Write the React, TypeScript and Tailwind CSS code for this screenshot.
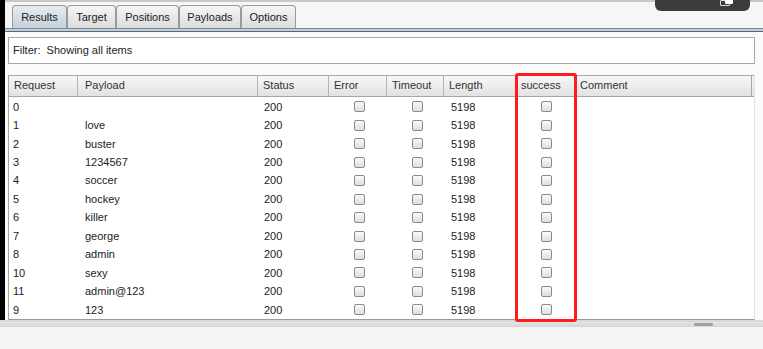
import React from 'react';

const rows: [string, string][] = [
  ['0', ''],
  ['1', 'love'],
  ['2', 'buster'],
  ['3', '1234567'],
  ['4', 'soccer'],
  ['5', 'hockey'],
  ['6', 'killer'],
  ['7', 'george'],
  ['8', 'admin'],
  ['10', 'sexy'],
  ['11', 'admin@123'],
  ['9', '123'],
];

const tabs = ['Results', 'Target', 'Positions', 'Payloads', 'Options'];
const cols = ['Request', 'Payload', 'Status', 'Error', 'Timeout', 'Length', 'success', 'Comment'];
const gridCols = 'grid grid-cols-[70px_180px_71px_58px_57px_72px_59px_177px]';

const Box = () => (
  <span className="block w-[11px] h-[11px] rounded-[2px] border border-[#8a8a8a] bg-gradient-to-b from-[#fafafa] to-[#dedede]" />
);

export default function App() {
  return (
    <div
      className="relative w-[763px] h-[349px] overflow-hidden bg-[#f4f4f4] text-[11px] text-[#222]"
      style={{ fontFamily: '"Liberation Sans", Arial, sans-serif' }}
    >
      <div className="flex h-[320px]">
        {/* black strip at left edge */}
        <div className="w-[5px] bg-black" />

        <div className="flex-1 flex flex-col bg-[#fbfbfb]">
          <div className="h-[5px] border-t-2 border-[#c8c8c8] bg-[#f6f6f6]" />

          {/* tabs */}
          <div className="flex h-[23px] pl-[7px] items-end bg-[#f6f6f6]">
            {tabs.map((t, i) => (
              <div
                key={t}
                className={
                  'h-[23px] flex items-center justify-center border border-b-0 border-[#9a9a9a] rounded-t-[4px] text-[#222] ' +
                  (i === 0
                    ? 'w-[55px] bg-gradient-to-b from-[#e6ecf2] to-[#c6d0da]'
                    : i === 1
                    ? 'w-[49px] bg-gradient-to-b from-[#f6f6f6] to-[#dcdcdc]'
                    : i === 2
                    ? 'w-[63px] bg-gradient-to-b from-[#f6f6f6] to-[#dcdcdc]'
                    : i === 3
                    ? 'w-[62px] bg-gradient-to-b from-[#f6f6f6] to-[#dcdcdc]'
                    : 'w-[55px] bg-gradient-to-b from-[#f6f6f6] to-[#dcdcdc]')
                }
              >
                {t}
              </div>
            ))}
          </div>

          {/* tab bar separator */}
          <div className="h-[1px] bg-[#7d8896]" />
          <div className="h-[2px] bg-[#bfcddc]" />
          <div className="h-[1px] bg-[#5e6670]" />

          {/* filter */}
          <div className="ml-[3px] mt-[5px] w-[747px] h-[27px] flex items-center px-[4px] border border-[#a8a8a8] bg-white">
            Filter:&nbsp; Showing all items
          </div>

          {/* table */}
          <div className="ml-[3px] mt-[11px] w-[747px] flex-1 flex flex-col bg-white border-b border-[#9a9a9a] border-r border-r-[#e4e4e4]">
            <div className={gridCols + ' h-[22px] bg-gradient-to-b from-[#f7f7f7] to-[#e2e2e2] border-t border-b border-[#a6a6a6] text-[#333]'}>
              {cols.map((c, i) => (
                <div
                  key={c}
                  className={
                    'flex items-center border-r ' +
                    (i === 1 ? 'pl-[7px] ' : 'pl-[5px] ') +
                    (i < cols.length - 1 ? 'border-[#b4b4b4]' : 'border-[#a6a6a6]') +
                    (i === 0 ? ' pl-[4px] border-l border-l-[#a6a6a6]' : '')
                  }
                >
                  {c}
                </div>
              ))}
            </div>
            <div className="pt-[1px] border-l border-[#a6a6a6] flex-1">
              {rows.map(([req, payload]) => (
                <div key={req} className={gridCols + ' h-[18.45px] items-center'}>
                  <div className="pl-[4px]">{req}</div>
                  <div className="pl-[6px]">{payload}</div>
                  <div className="pl-[5px]">200</div>
                  <div className="flex justify-center pl-[1px]"><Box /></div>
                  <div className="flex justify-center pl-[1px]"><Box /></div>
                  <div className="pl-[6px]">5198</div>
                  <div className="flex justify-center"><Box /></div>
                  <div />
                </div>
              ))}
            </div>
          </div>
        </div>
      </div>

      {/* splitter / bottom area */}
      <div className="h-[2px] bg-[#d8d8d8]" />
      <div className="relative h-[5px] bg-gradient-to-b from-[#e6e6e6] to-[#d6d6d6]">
        <div className="absolute left-[694px] top-[1px] w-[19px] h-[3px] rounded-[1px] bg-[#9ea2a8]" />
      </div>

      {/* red highlight annotation */}
      <div className="absolute left-[515px] top-[73px] w-[62px] h-[249px] border-[3px] border-[#ff1c1c] rounded-[3px]" />

      {/* dark overlay at top right */}
      <div className="absolute left-[655px] top-[-6px] w-[95px] h-[17px] rounded-b-[6px] bg-[#3b3b3b]">
        <div className="absolute left-[65px] top-[6px] w-[10px] h-[6px] border border-[#ddd] rounded-[1px]" />
        <div className="absolute left-[70px] top-[4px] w-[8px] h-[6px] bg-white rounded-[1px]" />
      </div>
    </div>
  );
}
